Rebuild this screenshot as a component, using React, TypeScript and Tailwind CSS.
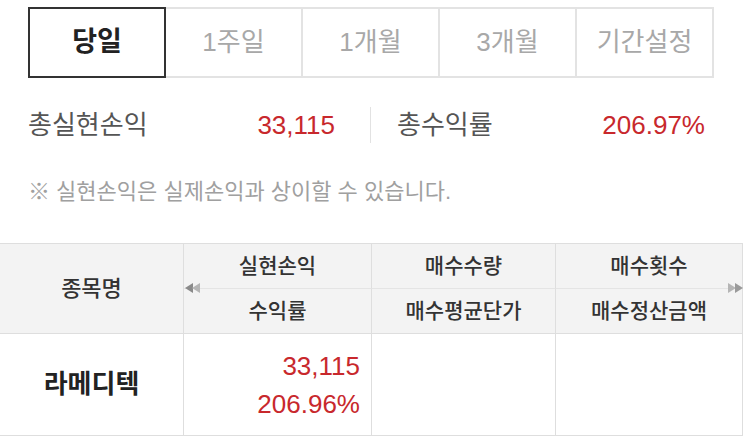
import React from "react";

const FONT = { fontFamily: '"Liberation Sans", "Noto Sans CJK KR", sans-serif' };

function Arrows({ dir }: { dir: "left" | "right" }) {
  return (
    <svg width="16" height="10" viewBox="0 0 16 10">
      {dir === "left" ? (
        <>
          <polygon points="0,5 8,0 8,10" fill="#8a8a8a" />
          <polygon points="7,5 15,0 15,10" fill="#b5b5b5" />
        </>
      ) : (
        <>
          <polygon points="1,0 9,5 1,10" fill="#b5b5b5" />
          <polygon points="8,0 16,5 8,10" fill="#9a9a9a" />
        </>
      )}
    </svg>
  );
}

export default function App() {
  const tabs = ["1주일", "1개월", "3개월", "기간설정"];
  return (
    <div className="w-[743px] h-[446px] bg-white overflow-hidden" style={FONT}>
      {/* Tabs */}
      <div className="pt-[7px] pl-[28px] pr-[29px]">
        <div className="flex h-[71px]">
          <div className="w-[138px] border-2 border-[#333] flex items-center justify-center text-[27px] font-bold text-[#222]">
            당일
          </div>
          {tabs.map((t, i) => (
            <div
              key={t}
              className={`flex-1 border-t-2 border-b-2 border-r-2 border-[#e3e3e3] flex items-center justify-center text-[26px] text-[#a8a8a8] ${i === 0 ? "border-l-0" : ""}`}
            >
              {t}
            </div>
          ))}
        </div>
      </div>

      {/* Summary */}
      <div className="mt-[29px] flex items-center h-[36px] pl-[28px] pr-[29px]">
        <div className="w-[342px] flex items-center justify-between pr-[35px]">
          <span className="text-[26px] text-[#555]">총실현손익</span>
          <span className="text-[26px] text-[#c8282c]">33,115</span>
        </div>
        <div className="w-px h-[36px] bg-[#e2e2e2]" />
        <div className="flex-1 flex items-center justify-between pl-[26px] pr-[9px]">
          <span className="text-[26px] text-[#555]">총수익률</span>
          <span className="text-[26px] text-[#c8282c]">206.97%</span>
        </div>
      </div>

      {/* Note */}
      <div className="mt-[35px] pl-[28px] h-[28px] leading-[28px] text-[22px] text-[#a0a0a0]">
        ※ 실현손익은 실제손익과 상이할 수 있습니다.
      </div>

      {/* Table */}
      <div className="relative mt-[37px]">
        <div className="grid grid-cols-[184px_188px_184px_187px] grid-rows-[45px_45px_102px] border-t border-[#dedede]">
          <div className="row-span-2 bg-[#f3f3f3] border-r border-b border-[#dedede] flex items-center justify-center text-[22px] font-medium text-[#333]">
            종목명
          </div>
          <div className="bg-[#f3f3f3] border-r border-b border-[#e4e4e4] border-r-[#dedede] flex items-center justify-center text-[21px] font-medium text-[#333]">
            실현손익
          </div>
          <div className="bg-[#f3f3f3] border-r border-b border-[#e4e4e4] border-r-[#dedede] flex items-center justify-center text-[21px] font-medium text-[#333]">
            매수수량
          </div>
          <div className="bg-[#f3f3f3] border-r border-b border-[#e4e4e4] border-r-[#dedede] flex items-center justify-center text-[21px] font-medium text-[#333]">
            매수횟수
          </div>
          <div className="bg-[#f3f3f3] border-r border-b border-[#dedede] flex items-center justify-center text-[21px] font-medium text-[#333]">
            수익률
          </div>
          <div className="bg-[#f3f3f3] border-r border-b border-[#dedede] flex items-center justify-center text-[21px] font-medium text-[#333]">
            매수평균단가
          </div>
          <div className="bg-[#f3f3f3] border-r border-b border-[#dedede] flex items-center justify-center text-[21px] font-medium text-[#333]">
            매수정산금액
          </div>
          <div className="border-r border-b border-[#dedede] flex items-center justify-center text-[26px] font-bold text-[#222]">
            라메디텍
          </div>
          <div className="border-r border-b border-[#dedede] flex flex-col items-end justify-center pr-[11px] text-[26px] leading-[38px] text-[#c8282c]">
            <span>33,115</span>
            <span>206.96%</span>
          </div>
          <div className="border-r border-b border-[#dedede]" />
          <div className="border-r border-b border-[#dedede]" />
        </div>
        <div className="absolute left-[185px] top-[40px]">
          <Arrows dir="left" />
        </div>
        <div className="absolute left-[727px] top-[40px]">
          <Arrows dir="right" />
        </div>
      </div>
    </div>
  );
}
